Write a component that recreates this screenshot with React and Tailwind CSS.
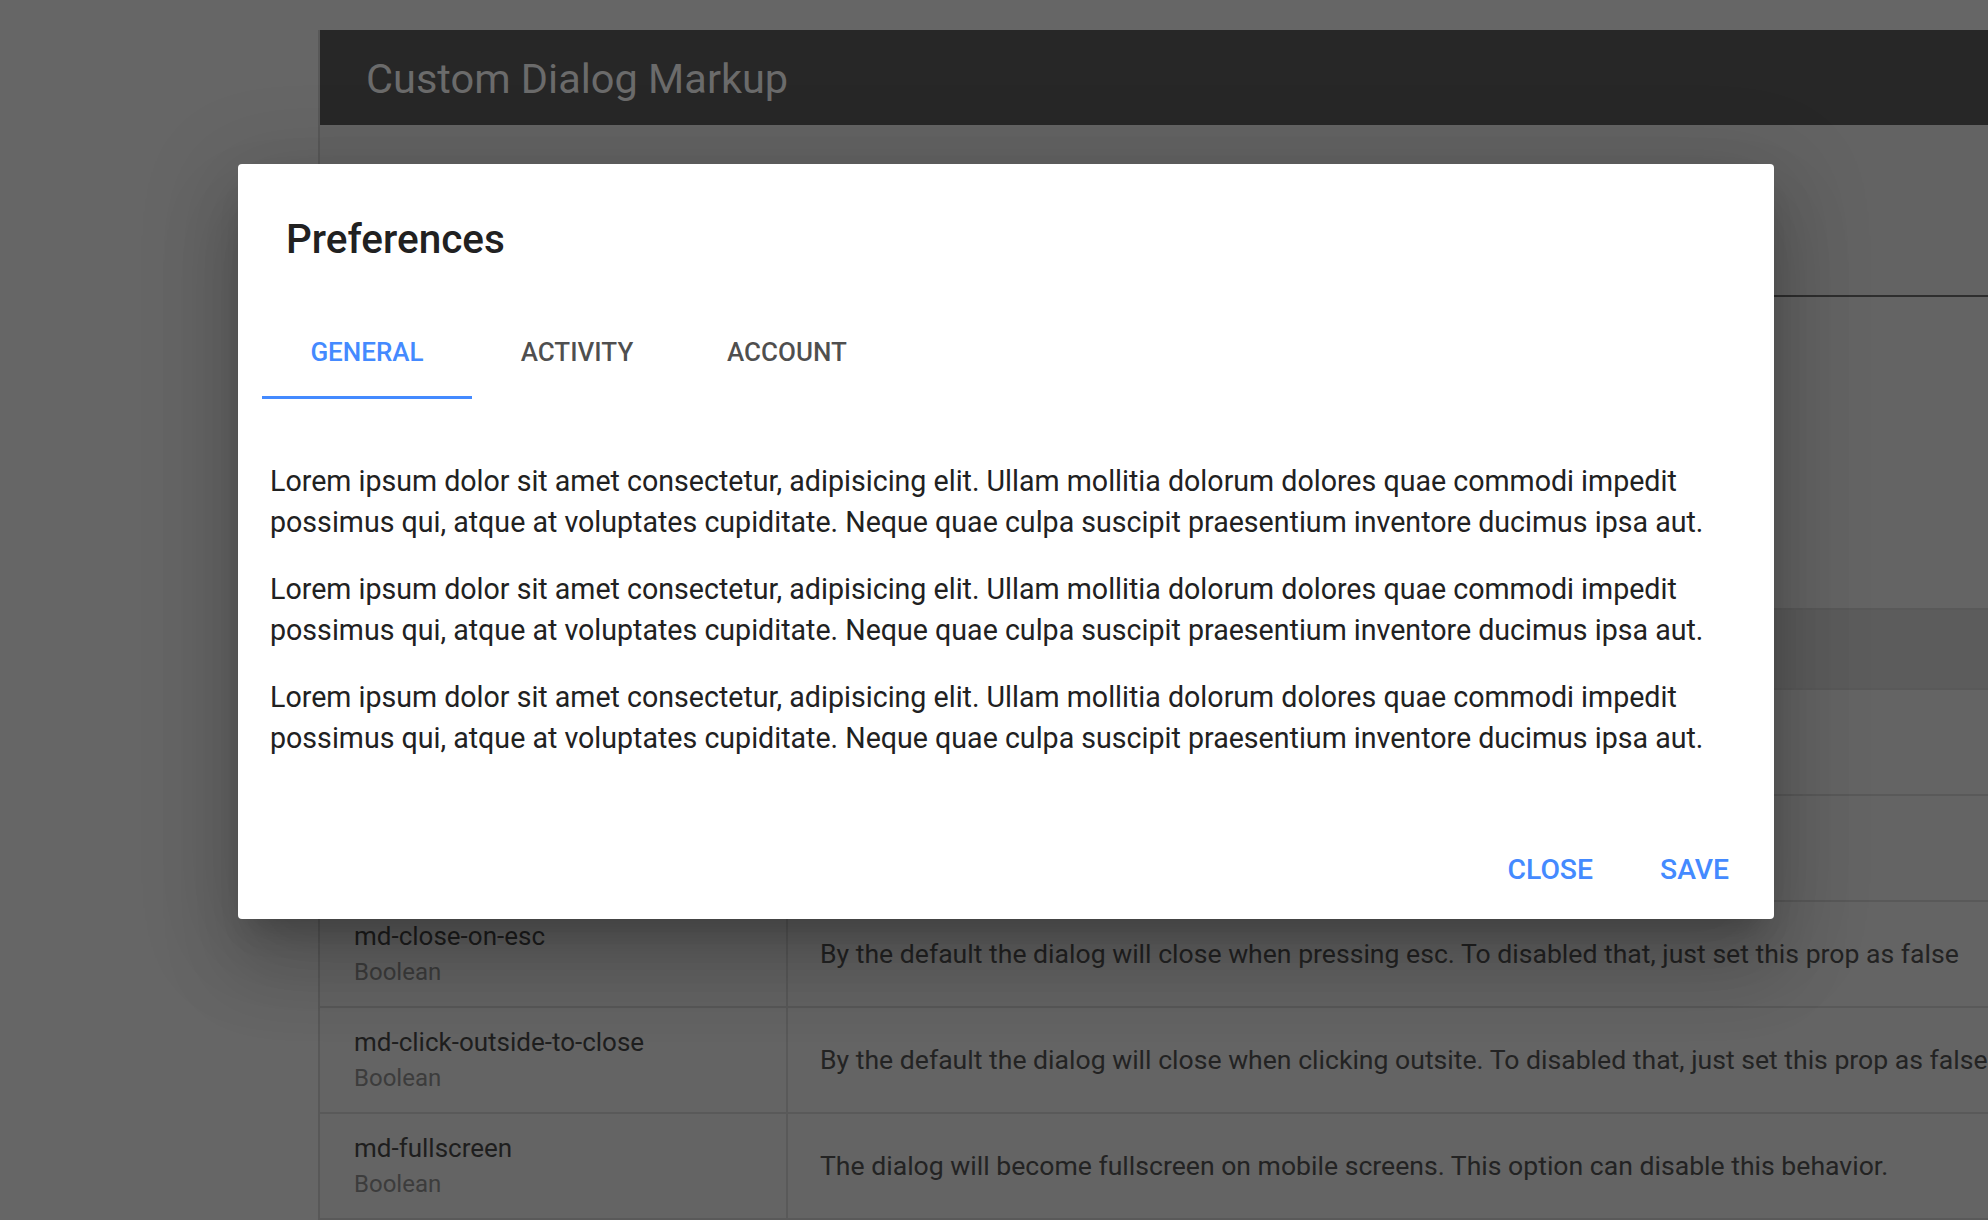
import React, { useState } from "react";

// rows hidden behind the dialog keep their cells but no text
const props = [
  { name: "", type: "", desc: "" },
  { name: "", type: "", desc: "" },
  {
    name: "md-close-on-esc",
    type: "Boolean",
    desc: "By the default the dialog will close when pressing esc. To disabled that, just set this prop as false",
  },
  {
    name: "md-click-outside-to-close",
    type: "Boolean",
    desc: "By the default the dialog will close when clicking outsite. To disabled that, just set this prop as false",
  },
  {
    name: "md-fullscreen",
    type: "Boolean",
    desc: "The dialog will become fullscreen on mobile screens. This option can disable this behavior.",
  },
];

const lorem =
  "Lorem ipsum dolor sit amet consectetur, adipisicing elit. Ullam mollitia dolorum dolores quae commodi impedit possimus qui, atque at voluptates cupiditate. Neque quae culpa suscipit praesentium inventore ducimus ipsa aut.";

const tabs = ["General", "Activity", "Account"];

const App = () => {
  const [active, setActive] = useState(0);

  return (
    <div className="relative w-[1988px] h-[1220px] overflow-hidden bg-[#666666] font-[Roboto,sans-serif]">
      {/* page behind the backdrop */}
      <div className="ml-[318px] mt-[30px] w-[1800px] border-l-2 border-[#585858] bg-[#646464]">
        <div className="h-[95px] bg-[#272727] pl-[46px] pt-[1px] text-[41.5px] leading-[95px] text-[#6b6b6b]">
          Custom Dialog Markup
        </div>
        <div className="h-[172px] bg-[#636363] border-b-2 border-[#2e2e2e]" />
        <div className="h-[311px]" />

        <div className="flex h-[82px] bg-[#5c5c5c] border-y-2 border-[#595959]">
          <div className="w-[468px] border-r-2 border-[#595959]" />
        </div>

        {props.map((p, i) => (
          <div key={i} className="flex h-[106px] border-b-2 border-[#595959]">
            <div className="w-[468px] flex flex-col justify-center pl-[34px] border-r-2 border-[#595959]">
              {p.name && <div className="text-[26px] leading-[36px] text-[#1e1e1e]">{p.name}</div>}
              {p.type && <div className="text-[24px] leading-[36px] text-[#3c3c3c]">{p.type}</div>}
            </div>
            <div className="flex items-center pl-[32px] text-[26.6px] text-[#232323] whitespace-nowrap">
              {p.desc}
            </div>
          </div>
        ))}
      </div>

      {/* dialog */}
      <div className="absolute left-[238px] top-[164px] w-[1536px] h-[755px] bg-white rounded-[4px] flex flex-col shadow-[0_22px_30px_-14px_rgba(0,0,0,0.2),0_48px_76px_6px_rgba(0,0,0,0.14),0_18px_92px_16px_rgba(0,0,0,0.12)]">
        <h2 className="pl-[48px] pt-[51px] text-[40.5px] leading-[48px] font-medium text-[#212121]">
          Preferences
        </h2>

        <div className="mt-[45px] flex pl-[24px]">
          {tabs.map((t, i) => (
            <button
              key={t}
              onClick={() => setActive(i)}
              className={
                i === active
                  ? "w-[210px] h-[91px] flex items-center justify-center uppercase text-[26px] font-medium text-[#448aff] border-b-[3px] border-[#448aff]"
                  : "w-[210px] h-[91px] flex items-center justify-center uppercase text-[26px] font-medium text-black/70 border-b-[3px] border-transparent"
              }
            >
              {t}
            </button>
          ))}
        </div>

        <div className="mt-[62px] px-[32px] flex flex-col gap-[27px] text-[28.6px] leading-[40.5px] text-[#212121]">
          <p>{lorem}</p>
          <p>{lorem}</p>
          <p>{lorem}</p>
        </div>

        <div className="mt-auto flex justify-end px-[13px] pb-[13px] gap-[3px]">
          <button className="h-[72px] px-[32px] uppercase text-[28.3px] font-medium text-[#448aff]">Close</button>
          <button className="h-[72px] px-[32px] uppercase text-[28.3px] font-medium text-[#448aff]">Save</button>
        </div>
      </div>
    </div>
  );
};

export default App;
